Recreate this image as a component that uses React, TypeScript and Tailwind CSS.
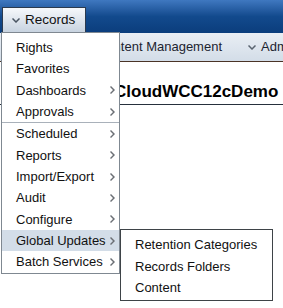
import React from 'react'

const mainItems = [
  { label: 'Rights', sub: false },
  { label: 'Favorites', sub: false },
  { label: 'Dashboards', sub: true },
  { label: 'Approvals', sub: true },
  { label: '-', sub: false },
  { label: 'Scheduled', sub: true },
  { label: 'Reports', sub: true },
  { label: 'Import/Export', sub: true },
  { label: 'Audit', sub: true },
  { label: 'Configure', sub: true },
  { label: 'Global Updates', sub: true, active: true },
  { label: 'Batch Services', sub: true },
]

const subItems = ['Retention Categories', 'Records Folders', 'Content']

const Arrow = () => (
  <svg width="6" height="9" viewBox="0 0 6 9" className="absolute right-[3px] top-1/2 -translate-y-1/2">
    <path d="M1 0.5 L5 4.5 L1 8.5 L0 7.5 L3 4.5 L0 1.5 Z" fill="#6b6f75" />
  </svg>
)

const Chevron = ({ color = '#4a5563' }: { color?: string }) => (
  <svg width="8" height="5" viewBox="0 0 8 5">
    <path d="M0.5 0.5 L4 4 L7.5 0.5" stroke={color} strokeWidth="1.5" fill="none" />
  </svg>
)

export default function App() {
  return (
    <div
      className="relative w-[283px] h-[308px] bg-white overflow-hidden text-[#111]"
      style={{ fontFamily: '"Liberation Sans", Arial, sans-serif' }}
    >
      {/* top bar */}
      <div className="h-[33px] bg-gradient-to-b from-[#3f78c0] via-[#124a8d] to-[#0b3d7c] flex items-end pl-[2px]">
        <div className="h-[26px] w-[84px] border border-b-0 border-[#2b3a4e] bg-gradient-to-b from-[#f6f8fb] to-[#c6d2df] flex items-center gap-[5px] pl-[9px] text-[13.5px]">
          <Chevron />
          <span>Records</span>
        </div>
      </div>

      {/* second bar */}
      <div className="h-[29px] bg-gradient-to-b from-[#e9eef4] to-[#d3dde8] border-b border-[#4b3426] flex items-center text-[13px] text-[#1c2430] whitespace-nowrap overflow-hidden">
        <span className="ml-[97px] shrink-0">Content Management</span>
        <span className="ml-[26px] flex items-center gap-[5px] shrink-0">
          <Chevron color="#5a6470" />
          Admin
        </span>
      </div>

      {/* content */}
      <div className="pt-[18px] pl-[114px] pr-2 border-b border-[#26303c] h-[43px] whitespace-nowrap">
        <span className="font-bold text-[17px] leading-[21px] text-black">CloudWCC12cDemo</span>
      </div>

      {/* records menu */}
      <div className="absolute left-[1px] top-[32px] w-[119px] bg-white border border-[#7f8891] pt-[4px] text-[13px]">
        {mainItems.map((it, i) =>
          it.label === '-' ? (
            <div key={i} className="h-px bg-[#a9b1ba]" />
          ) : (
            <div
              key={i}
              className={`relative h-[21.33px] flex items-center pl-[14px] ${it.active ? 'bg-[#d3dde8]' : ''}`}
            >
              {it.label}
              {it.sub && <Arrow />}
            </div>
          )
        )}
      </div>

      {/* submenu */}
      <div className="absolute left-[120px] top-[229px] w-[153px] h-[72px] bg-white border border-[#3e4347] pt-[4px] text-[13px]">
        {subItems.map((s) => (
          <div key={s} className="h-[21.5px] flex items-center pl-[14px]">
            {s}
          </div>
        ))}
      </div>
    </div>
  )
}
